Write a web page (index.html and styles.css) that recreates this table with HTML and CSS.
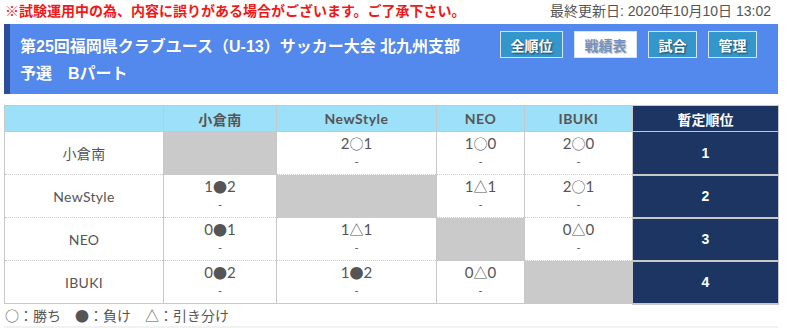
FILE: index.html
```html
<!DOCTYPE html>
<html lang="ja">
<head>
<meta charset="utf-8">
<link rel="stylesheet" href="styles.css">
</head>
<body>
<div class="page">
  <div class="topbar">
    <div class="notice">※試験運用中の為、内容に誤りがある場合がございます。ご了承下さい。</div>
    <div class="updated">最終更新日: 2020年10月10日 13:02</div>
  </div>
  <div class="hero">
    <div class="title">
      <div class="t1">第25回福岡県クラブユース（U-13）サッカー大会 北九州支部</div>
      <div class="t2">予選　Bパート</div>
    </div>
    <div class="btns">
      <span class="btn w3">全順位</span>
      <span class="btn w3 active">戦績表</span>
      <span class="btn w2">試合</span>
      <span class="btn w2">管理</span>
    </div>
  </div>
  <table class="grid">
    <colgroup>
      <col class="c0"><col class="c1"><col class="c2"><col class="c3"><col class="c4"><col class="c5">
    </colgroup>
    <thead>
      <tr><th></th><th>小倉南</th><th>NewStyle</th><th>NEO</th><th>IBUKI</th><th class="rankh">暫定順位</th></tr>
    </thead>
    <tbody>
      <tr><td class="name">小倉南</td><td class="na"></td><td><div class="sc">2<span class="m">○</span>1</div><div class="dash">-</div></td><td><div class="sc">1<span class="m">○</span>0</div><div class="dash">-</div></td><td><div class="sc">2<span class="m">○</span>0</div><div class="dash">-</div></td><td class="rank">1</td></tr>
      <tr><td class="name">NewStyle</td><td><div class="sc">1<span class="m">●</span>2</div><div class="dash">-</div></td><td class="na"></td><td><div class="sc">1<span class="m">△</span>1</div><div class="dash">-</div></td><td><div class="sc">2<span class="m">○</span>1</div><div class="dash">-</div></td><td class="rank">2</td></tr>
      <tr><td class="name">NEO</td><td><div class="sc">0<span class="m">●</span>1</div><div class="dash">-</div></td><td><div class="sc">1<span class="m">△</span>1</div><div class="dash">-</div></td><td class="na"></td><td><div class="sc">0<span class="m">△</span>0</div><div class="dash">-</div></td><td class="rank">3</td></tr>
      <tr><td class="name">IBUKI</td><td><div class="sc">0<span class="m">●</span>2</div><div class="dash">-</div></td><td><div class="sc">1<span class="m">●</span>2</div><div class="dash">-</div></td><td><div class="sc">0<span class="m">△</span>0</div><div class="dash">-</div></td><td class="na"></td><td class="rank">4</td></tr>
    </tbody>
  </table>
  <div class="legend">○：勝ち　●：負け　△：引き分け</div>
  <div class="footbar"></div>
</div>
</body>
</html>
```
FILE: styles.css
```css
* { box-sizing: border-box; }
html, body { margin: 0; padding: 0; background: #fff; }
body { font-family: "Liberation Sans", "Noto Sans CJK JP", sans-serif; }
.page { padding: 0 10px 0 4px; width: 788px; }
.topbar { display: flex; justify-content: space-between; align-items: center; height: 24px; padding-bottom: 5px; padding-right: 7px; white-space: nowrap; }
.notice { color: #f01818; font-weight: bold; font-size: 14px; padding-left: 1px; }
.updated { color: #555; font-size: 14px; }
.hero { display: flex; justify-content: space-between; height: 70px; background: #5389ec; border-left: 6px solid #2b4e9c; }
.title { color: #fff; font-weight: bold; font-size: 16px; padding-left: 10px; padding-top: 9px; line-height: 27px; white-space: nowrap; text-shadow: 0 0 1px rgba(0,0,0,0.2); }
.btns { display: flex; gap: 11px; padding-top: 7px; padding-right: 21px; align-items: flex-start; }
.btn { display: flex; align-items: center; justify-content: center; height: 27px; padding: 0; background: #3497cb; border: 1px solid #d6e4ee; color: #fff; font-weight: bold; font-size: 14px; white-space: nowrap; text-shadow: 1px 1px 2px rgba(0,0,0,0.6); }
.btn.w3 { width: 63px; }
.btn.w2 { width: 49px; }
.btn.active { background: #fff; color: #7391c0; text-shadow: 1px 1px 1px rgba(0,0,0,0.25); }
.grid { margin-top: 11px; width: 774px; border-collapse: collapse; border: 1px solid #c8c8c8; table-layout: fixed; font-family: "Lato", "Noto Sans CJK JP", sans-serif; }
.c0 { width: 159px; } .c1 { width: 113px; } .c2 { width: 160px; } .c3 { width: 88px; } .c4 { width: 108px; } .c5 { width: 146px; }
.grid th { height: 26px; background: #9de0f9; color: #555; font-weight: bold; font-size: 14px; border-left: 1px solid #c8c8c8; border-right: 1px solid #c8c8c8; border-bottom: 1px solid #c8c8c8; letter-spacing: 0.5px; padding: 0; }
.grid th.rankh { background: #1c3563; color: #fff; font-family: "Liberation Sans", "Noto Sans CJK JP", sans-serif; letter-spacing: 0; }
.grid td { height: 43px; text-align: center; vertical-align: middle; padding: 0; border-left: 1px solid #c8c8c8; border-right: 1px solid #c8c8c8; border-bottom: 1px dotted #c8c8c8; color: #555; font-size: 14px; }
.grid td.name { color: #555; font-size: 14px; letter-spacing: 0.3px; }
.grid td.na { background: #cacaca; }
.grid td.rank { background: #1c3563; color: #fff; font-weight: bold; font-family: "Liberation Sans", sans-serif; font-size: 14px; border-bottom: 2px solid #c8c8c8; }
.sc { font-size: 15px; line-height: 18px; margin-top: -3px; }
.m { font-family: "Noto Sans CJK JP", sans-serif; font-size: 14px; }
.dash { font-size: 11px; line-height: 14px; margin-top: 3px; }
.legend { color: #555; font-size: 14px; height: 21px; line-height: 20px; padding-left: 1px; margin-top: 0; font-family: "Noto Sans CJK JP", sans-serif; }
.footbar { height: 10px; background: #f1f1f1; width: 774px; }
```
